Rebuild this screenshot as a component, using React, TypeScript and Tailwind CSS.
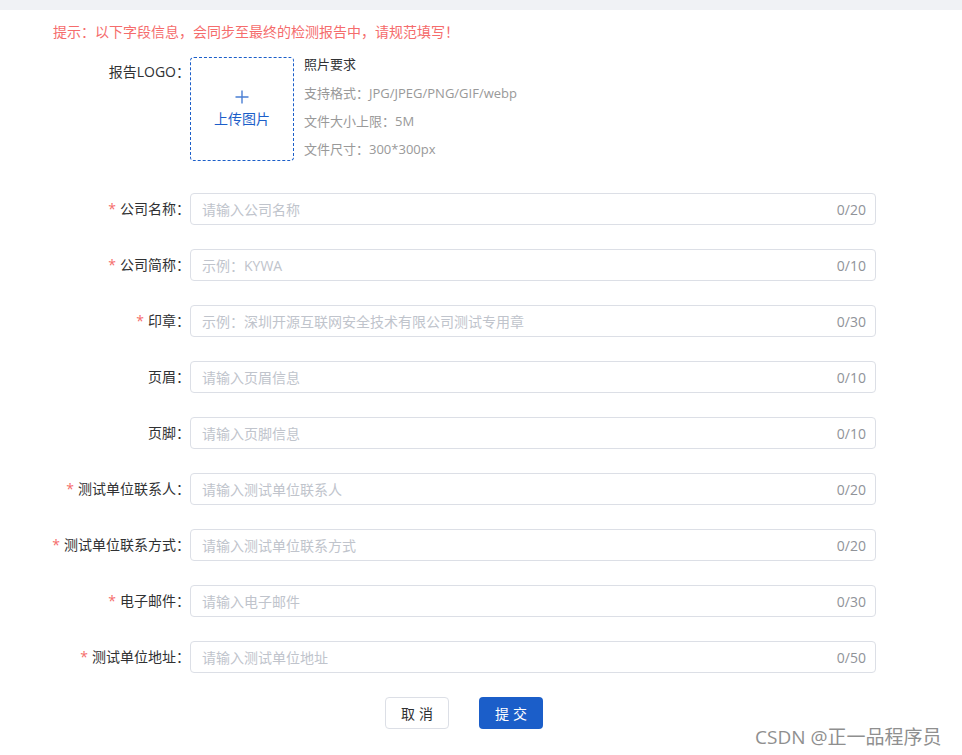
import React from "react";

const fields: { label: string; required: boolean; placeholder: string; max: number }[] = [
  { label: "公司名称", required: true, placeholder: "请输入公司名称", max: 20 },
  { label: "公司简称", required: true, placeholder: "示例：KYWA", max: 10 },
  { label: "印章", required: true, placeholder: "示例：深圳开源互联网安全技术有限公司测试专用章", max: 30 },
  { label: "页眉", required: false, placeholder: "请输入页眉信息", max: 10 },
  { label: "页脚", required: false, placeholder: "请输入页脚信息", max: 10 },
  { label: "测试单位联系人", required: true, placeholder: "请输入测试单位联系人", max: 20 },
  { label: "测试单位联系方式", required: true, placeholder: "请输入测试单位联系方式", max: 20 },
  { label: "电子邮件", required: true, placeholder: "请输入电子邮件", max: 30 },
  { label: "测试单位地址", required: true, placeholder: "请输入测试单位地址", max: 50 },
];

export default function App() {
  return (
    <div
      className="relative w-[962px] h-[755px] bg-white overflow-hidden text-[14px] text-[#303133]"
      style={{ fontFamily: '"Open Sans", "Noto Sans CJK SC", sans-serif' }}
    >
      <div className="h-[10px] bg-[#f0f2f5]" />
      <div className="pt-[12px] pl-[53px] h-[32px] leading-[20px] text-[#f56c6c] whitespace-nowrap">
        提示：以下字段信息，会同步至最终的检测报告中，请规范填写！
      </div>
      <div className="flex flex-col mt-[15px]">
        <div className="flex">
          <div className="w-[190px] text-right leading-[30px]">报告LOGO：</div>
          <div className="w-[104px] h-[104px] border border-dashed border-[#1b5ec9] rounded-[4px] flex flex-col items-center justify-center text-[#1b5ec9]">
            <svg width="14" height="14" viewBox="0 0 14 14" className="mt-[1px]">
              <path d="M7 0.5V13.5M0.5 7H13.5" stroke="#4a7fd4" strokeWidth="1.4" fill="none" />
            </svg>
            <div className="leading-[20px] mt-[5px]">上传图片</div>
          </div>
          <div className="ml-[10px] flex flex-col text-[13px]">
            <div className="leading-[14px] text-[#303133]">照片要求</div>
            <div className="leading-[28px] text-[#999999] mt-[8px]">支持格式：JPG/JPEG/PNG/GIF/webp</div>
            <div className="leading-[28px] text-[#999999]">文件大小上限：5M</div>
            <div className="leading-[28px] text-[#999999]">文件尺寸：300*300px</div>
          </div>
        </div>
        <div className="flex flex-col gap-[24px] mt-[30px]">
          {fields.map((f) => (
            <div key={f.label} className="flex">
              <div className="w-[190px] text-right leading-[32px] whitespace-nowrap">
                {f.required && <span className="text-[#f56c6c] mr-[4px]">*</span>}
                {f.label}：
              </div>
              <div className="w-[686px] h-[32px] border border-[#dcdfe6] rounded-[4px] flex items-center pl-[11px] pr-[9px]">
                <span className="flex-1 text-[#c0c4cc] whitespace-nowrap">{f.placeholder}</span>
                <span className="text-[#909399]">0/{f.max}</span>
              </div>
            </div>
          ))}
        </div>
        <div className="flex gap-[30px] mt-[24px] pl-[385px]">
          <button className="w-[64px] h-[32px] border border-[#dcdfe6] rounded-[4px] bg-white text-[#303133] tracking-[4px] pl-[4px]">
            取消
          </button>
          <button className="w-[64px] h-[32px] rounded-[4px] bg-[#1b5ec9] text-white tracking-[4px] pl-[4px]">
            提交
          </button>
        </div>
      </div>
      <div className="absolute left-[755px] top-[725px] text-[19px] leading-[24px] text-[#8f8f8f] whitespace-nowrap">
        CSDN @正一品程序员
      </div>
    </div>
  );
}
